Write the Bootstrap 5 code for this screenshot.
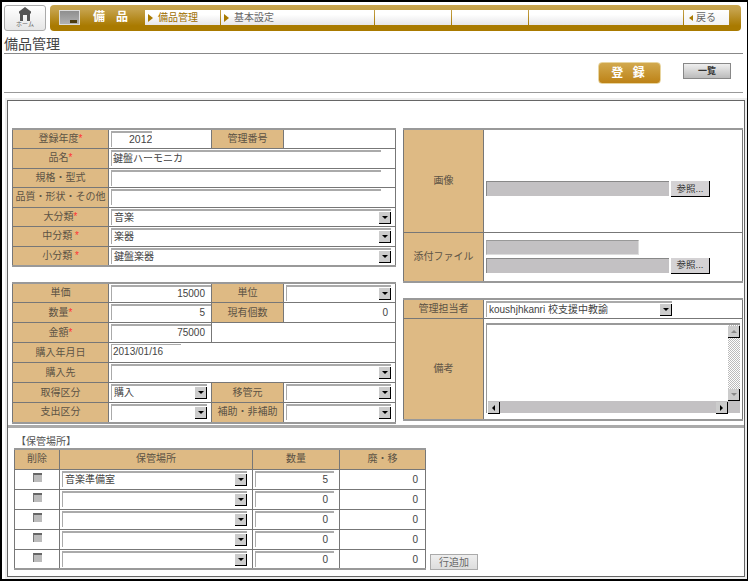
<!DOCTYPE html>
<html lang="ja">
<head>
<meta charset="utf-8">
<title>備品管理</title>
<link href="https://cdn.jsdelivr.net/npm/bootstrap@5.3.0/dist/css/bootstrap.min.css" rel="stylesheet">
<style>
html,body{margin:0;background:#fff;overflow:hidden}
body{font-family:"Liberation Sans","Noto Sans CJK JP",sans-serif;font-size:10px;line-height:1.2;color:#555}
.frame{width:748px;height:581px;border:solid #000;border-width:2px 1px 2px 2px;padding:3px 0 0 2px;overflow:hidden}
.homebtn{width:42px;height:26px;border:1px solid #aaa;border-radius:3px;background:linear-gradient(#fff,#e6e6e6);color:#666;font-size:6px;padding-top:1px;line-height:7px}
.goldbar{width:691px;height:26px;margin-left:4px;border-radius:4px;background:linear-gradient(#c9a650 0,#c4a048 20%,#a97a00 80%);padding:5px 0 0 9px}
.goldbox{width:21px;height:15px;background:linear-gradient(#8f8f8f,#b0b0b0);border:1px solid #ddd;position:relative}
.goldbox::after{content:"";position:absolute;right:2px;bottom:1px;width:7px;height:3px;background:#4a3a10}
.goldname{width:65px;padding-left:13px;color:#fff;font-weight:700;font-size:12px;letter-spacing:11px;line-height:15px;white-space:nowrap}
.menucell{height:15px;background:linear-gradient(#fff 30%,#e7e6e8);margin-right:1px;display:flex;align-items:center;font-size:10px;color:#666;padding-left:2px;white-space:nowrap}
.menucell i{display:block;border:solid transparent;border-width:4px 0 4px 5px;border-left-color:#a97a00;margin:0 5px 0 1px}
.menucell b{font-weight:400;color:#a06f00}
.m1{width:75px}.m2{width:153px}.m3{width:76px}.m4{width:76px}.m5{width:154px}.m6{width:45px;margin-right:0;background:linear-gradient(#fff,#f2f2f2)}
.menucell i.back{border-width:3px 4px 3px 0;border-color:transparent #a97a00 transparent transparent;margin:0 3px 0 3px}
.pagetitle{width:739px;height:23px;margin:0;padding-top:4px;border-bottom:1px solid #888;font-size:14px;font-weight:400;line-height:18px;color:#444}
.actionrow{width:739px;height:39px;border-bottom:1px solid #999;padding-top:8px}
.btn.savebtn{width:63px;height:22px;margin-left:594px;padding:0;border:1px solid #e8d5a0;border-radius:4px;background:linear-gradient(#d2a94e,#bd8216);color:#fff;font-weight:700;font-size:12px;letter-spacing:3px;line-height:19px}
.btn.listbtn{width:48px;height:16px;margin:1px 0 0 22px;padding:0;border:1px solid #888;border-radius:0;background:linear-gradient(#efefef,#bbb);color:#333;font-size:9px;font-weight:700;line-height:13px}
.panelwrap{width:742px;height:481px;margin:5px 0 0 1px;padding:2px;background:#eee}
.panelin{height:100%;background:#fff;border:1px solid #666;display:flex;flex-direction:column}
.uppersec{height:327px;padding:27px 0 0 4px;border-bottom:3px solid #aaa;gap:8px}
.leftcol{width:383px}.rightcol{width:339px}
.sheet{table-layout:fixed;margin:0;border-collapse:collapse;--bs-table-bg:#fff;--bs-table-color:#555;--bs-table-border-color:#777;font-size:10px}
.sheet>tbody>tr>*{padding:0;border:1px solid #777;vertical-align:top;line-height:1.2;box-shadow:none}
.sheet>tbody>tr>th{background:#deba84;font-weight:400;text-align:center;vertical-align:middle;color:#5c5344;white-space:nowrap}
.sheet>tbody>tr{height:19.5px}
.sheet>tbody>tr:first-child>*{border-top:2px solid #999}
.sheet>tbody>tr:last-child>*{border-bottom:2px solid #999}
.grid4{width:383px}
.lowtable{margin-top:15px}
.sheet.tallrows>tbody>tr{height:20px}
.c1{width:96px}.c2{width:103px}.c3{width:72px}.c4{width:112px}
.gridr{width:339px}.cr1{width:80px}.cr2{width:259px}
.gridb{width:411px}.cb1{width:45px}.cb2{width:193px}.cb3{width:87px}.cb4{width:86px}
.req{color:#f33}
.fld{display:block;height:16px;margin:1px 0 0 2px;border-top:2px solid #aaa;border-left:1px solid #aaa;padding:0 3px 0 1px;color:#444;font-size:10px;line-height:13px;white-space:nowrap;overflow:hidden}
.fld.num{text-align:right;padding-right:6px}
.f40{width:41px;padding-left:17px;font-size:10.5px}.f270{width:270px}.f100{width:100px}.f70{width:70px}.f78{width:79px}
.fld.plaintop{border-top:1px solid #aaa}
.pick{display:flex;justify-content:space-between;height:16px;margin:1px 0 0 2px;border-top:2px solid #aaa;border-left:1px solid #aaa;padding-left:2px;color:#444;font-size:10px;line-height:13px;white-space:nowrap}
.w280{width:280px}.w105{width:105px}.w96{width:96px}.w186{width:186px}.w185{width:185px}
.arrow{flex:none;width:12px;height:12px;margin-top:1px;background:#ccc;border-right:1px solid #000;border-bottom:1px solid #000;display:flex;align-items:center;justify-content:center}
.arrow::after{content:"";border:solid transparent;border-width:3px 3px 0;border-top-color:#000}
.arrow.up::after{border-width:0 3px 3px;border-bottom-color:#888;border-top-color:transparent}
.arrow.lf::after{border-width:3px 3px 3px 0;border-right-color:#000;border-top-color:transparent}
.arrow.rt::after{border-width:3px 0 3px 3px;border-left-color:#000;border-top-color:transparent}
.arrow.dn2::after{border-top-color:#888}
.plainnum{text-align:right;padding:4px 7px 0 0!important;color:#444;line-height:12px!important}
.sheet>tbody>tr.imgrow{height:103px}
.sheet>tbody>tr.attachrow{height:50px}
.sheet>tbody>tr.memorow{height:101px}
.filerow{display:flex;margin-left:2px;gap:2px}
.filebar{width:183px;height:15px;background:#c3c1c3;border-top:1px solid #888;border-left:1px solid #888}
.filebar.short{width:153px;border-top:1px solid #999;border-right:1px solid #ddd;border-bottom:1px solid #ddd;border-left:1px solid #aaa;margin:7px 0 3px 2px;height:15px}
.btn.browse{width:39px;height:16px;padding:0;border:0;border-right:1px solid #000;border-bottom:1px solid #000;border-radius:0;background:#d4d2d4;color:#333;font-size:9.5px;line-height:14px}
.sheet>tbody>tr>td.pad52{padding-top:51px}
.textwrap{margin:4px 0 0 2px;width:254px;height:90px;border-top:2px solid #999;border-left:1px solid #999;display:grid;grid-template-columns:1fr 12px;grid-template-rows:1fr 12px}
.vscroll{display:flex;flex-direction:column;justify-content:space-between;background-image:repeating-conic-gradient(#bbb 0 25%,#fff 0 50%);background-size:2px 2px;margin-bottom:0}
.hscroll{display:flex;justify-content:space-between;background:#c3c1c3;margin-left:1px}
.corner{background:#c3c1c3}
.lowersec{padding:5px 0 0 6px}
.sectlabel{height:15px;margin:0 0 0 2px;padding-top:3px;font-size:10px;color:#555}
.sheet.gridb>tbody>tr{height:20px}
.tick{display:block;width:9px;height:9px;margin:3px auto 0;background:#bbb;border-top:2px solid #666;border-left:1px solid #777}
.btn.addbtn{width:48px;height:16px;padding:0;margin-left:4px;border:1px solid #aaa;border-radius:0;background:linear-gradient(#eee,#ddd);color:#666;font-size:10px;line-height:13px}
.hsvg{display:block;margin:0 auto}
</style>
</head>
<body>
<div class="frame">
  <header class="d-flex">
    <a class="homebtn text-center text-decoration-none d-block">
      <svg class="hsvg" width="14" height="14" viewBox="0 0 14 14"><path d="M7 0 13 4.5V6.5H12V14H9V8H5V14H2V6.5H1V4.5Z" fill="#555"/></svg>
      ホーム
    </a>
    <nav class="goldbar d-flex">
      <div class="goldbox"></div>
      <div class="goldname">備品</div>
      <div class="menucell m1"><i></i><b>備品管理</b></div>
      <div class="menucell m2"><i></i>基本設定</div>
      <div class="menucell m3"></div>
      <div class="menucell m4"></div>
      <div class="menucell m5"></div>
      <div class="menucell m6"><i class="back"></i>戻る</div>
    </nav>
  </header>
  <h1 class="pagetitle">備品管理</h1>
  <div class="actionrow d-flex align-items-start">
    <button class="btn savebtn" type="button">登 録</button>
    <button class="btn listbtn" type="button">一覧</button>
  </div>
  <div class="panelwrap">
    <div class="panelin">
      <div class="uppersec d-flex">
        <div class="leftcol d-flex flex-column">
          <table class="table sheet grid4">
            <colgroup><col class="c1"><col class="c2"><col class="c3"><col class="c4"></colgroup>
            <tbody>
              <tr><th>登録年度<span class="req">*</span></th><td><span class="fld f40">2012</span></td><th>管理番号</th><td></td></tr>
              <tr><th>品名<span class="req">*</span></th><td colspan="3"><span class="fld f270">鍵盤ハーモニカ</span></td></tr>
              <tr><th>規格・型式</th><td colspan="3"><span class="fld f270"></span></td></tr>
              <tr><th>品質・形状・その他</th><td colspan="3"><span class="fld f270"></span></td></tr>
              <tr><th>大分類<span class="req">*</span></th><td colspan="3"><div class="pick w280">音楽<span class="arrow"></span></div></td></tr>
              <tr><th>中分類 <span class="req">*</span></th><td colspan="3"><div class="pick w280">楽器<span class="arrow"></span></div></td></tr>
              <tr><th>小分類 <span class="req">*</span></th><td colspan="3"><div class="pick w280">鍵盤楽器<span class="arrow"></span></div></td></tr>
            </tbody>
          </table>
          <table class="table sheet grid4 lowtable tallrows">
            <colgroup><col class="c1"><col class="c2"><col class="c3"><col class="c4"></colgroup>
            <tbody>
              <tr><th>単価</th><td><span class="fld num f100">15000</span></td><th>単位</th><td><div class="pick w105"><span class="arrow ms-auto"></span></div></td></tr>
              <tr><th>数量<span class="req">*</span></th><td><span class="fld num f100">5</span></td><th>現有個数</th><td class="plainnum">0</td></tr>
              <tr><th>金額<span class="req">*</span></th><td><span class="fld num f100">75000</span></td><td colspan="2"></td></tr>
              <tr><th>購入年月日</th><td colspan="3"><span class="fld f70 plaintop">2013/01/16</span></td></tr>
              <tr><th>購入先</th><td colspan="3"><div class="pick w280"><span class="arrow ms-auto"></span></div></td></tr>
              <tr><th>取得区分</th><td><div class="pick w96">購入<span class="arrow"></span></div></td><th>移管元</th><td><div class="pick w105"><span class="arrow ms-auto"></span></div></td></tr>
              <tr><th>支出区分</th><td><div class="pick w96"><span class="arrow ms-auto"></span></div></td><th>補助・非補助</th><td><div class="pick w105"><span class="arrow ms-auto"></span></div></td></tr>
            </tbody>
          </table>
        </div>
        <div class="rightcol d-flex flex-column">
          <table class="table sheet gridr">
            <colgroup><col class="cr1"><col class="cr2"></colgroup>
            <tbody>
              <tr class="imgrow"><th>画像</th><td class="pad52"><div class="filerow"><div class="filebar"></div><button class="btn browse" type="button">参照...</button></div></td></tr>
              <tr class="attachrow"><th>添付ファイル</th><td><div class="filebar short"></div><div class="filerow"><div class="filebar"></div><button class="btn browse" type="button">参照...</button></div></td></tr>
            </tbody>
          </table>
          <table class="table sheet gridr lowtable">
            <colgroup><col class="cr1"><col class="cr2"></colgroup>
            <tbody>
              <tr><th>管理担当者</th><td><div class="pick w186">koushjhkanri 校支援中教諭<span class="arrow"></span></div></td></tr>
              <tr class="memorow"><th>備考</th><td>
                <div class="textwrap">
                  <div></div>
                  <div class="vscroll"><span class="arrow up"></span><span class="arrow dn2"></span></div>
                  <div class="hscroll"><span class="arrow lf"></span><span class="arrow rt"></span></div>
                  <div class="corner"></div>
                </div>
              </td></tr>
            </tbody>
          </table>
        </div>
      </div>
      <div class="lowersec">
        <p class="sectlabel">【保管場所】</p>
        <div class="d-flex align-items-end">
          <table class="table sheet gridb">
            <colgroup><col class="cb1"><col class="cb2"><col class="cb3"><col class="cb4"></colgroup>
            <tbody>
              <tr><th>削除</th><th>保管場所</th><th>数量</th><th>廃・移</th></tr>
              <tr><td><span class="tick"></span></td><td><div class="pick w185">音楽準備室<span class="arrow"></span></div></td><td><span class="fld num f78">5</span></td><td class="plainnum">0</td></tr>
              <tr><td><span class="tick"></span></td><td><div class="pick w185"><span class="arrow ms-auto"></span></div></td><td><span class="fld num f78">0</span></td><td class="plainnum">0</td></tr>
              <tr><td><span class="tick"></span></td><td><div class="pick w185"><span class="arrow ms-auto"></span></div></td><td><span class="fld num f78">0</span></td><td class="plainnum">0</td></tr>
              <tr><td><span class="tick"></span></td><td><div class="pick w185"><span class="arrow ms-auto"></span></div></td><td><span class="fld num f78">0</span></td><td class="plainnum">0</td></tr>
              <tr><td><span class="tick"></span></td><td><div class="pick w185"><span class="arrow ms-auto"></span></div></td><td><span class="fld num f78">0</span></td><td class="plainnum">0</td></tr>
            </tbody>
          </table>
          <button class="btn addbtn" type="button">行追加</button>
        </div>
      </div>
    </div>
  </div>
</div>
<script src="https://cdn.jsdelivr.net/npm/bootstrap@5.3.0/dist/js/bootstrap.bundle.min.js"></script>
</body>
</html>
